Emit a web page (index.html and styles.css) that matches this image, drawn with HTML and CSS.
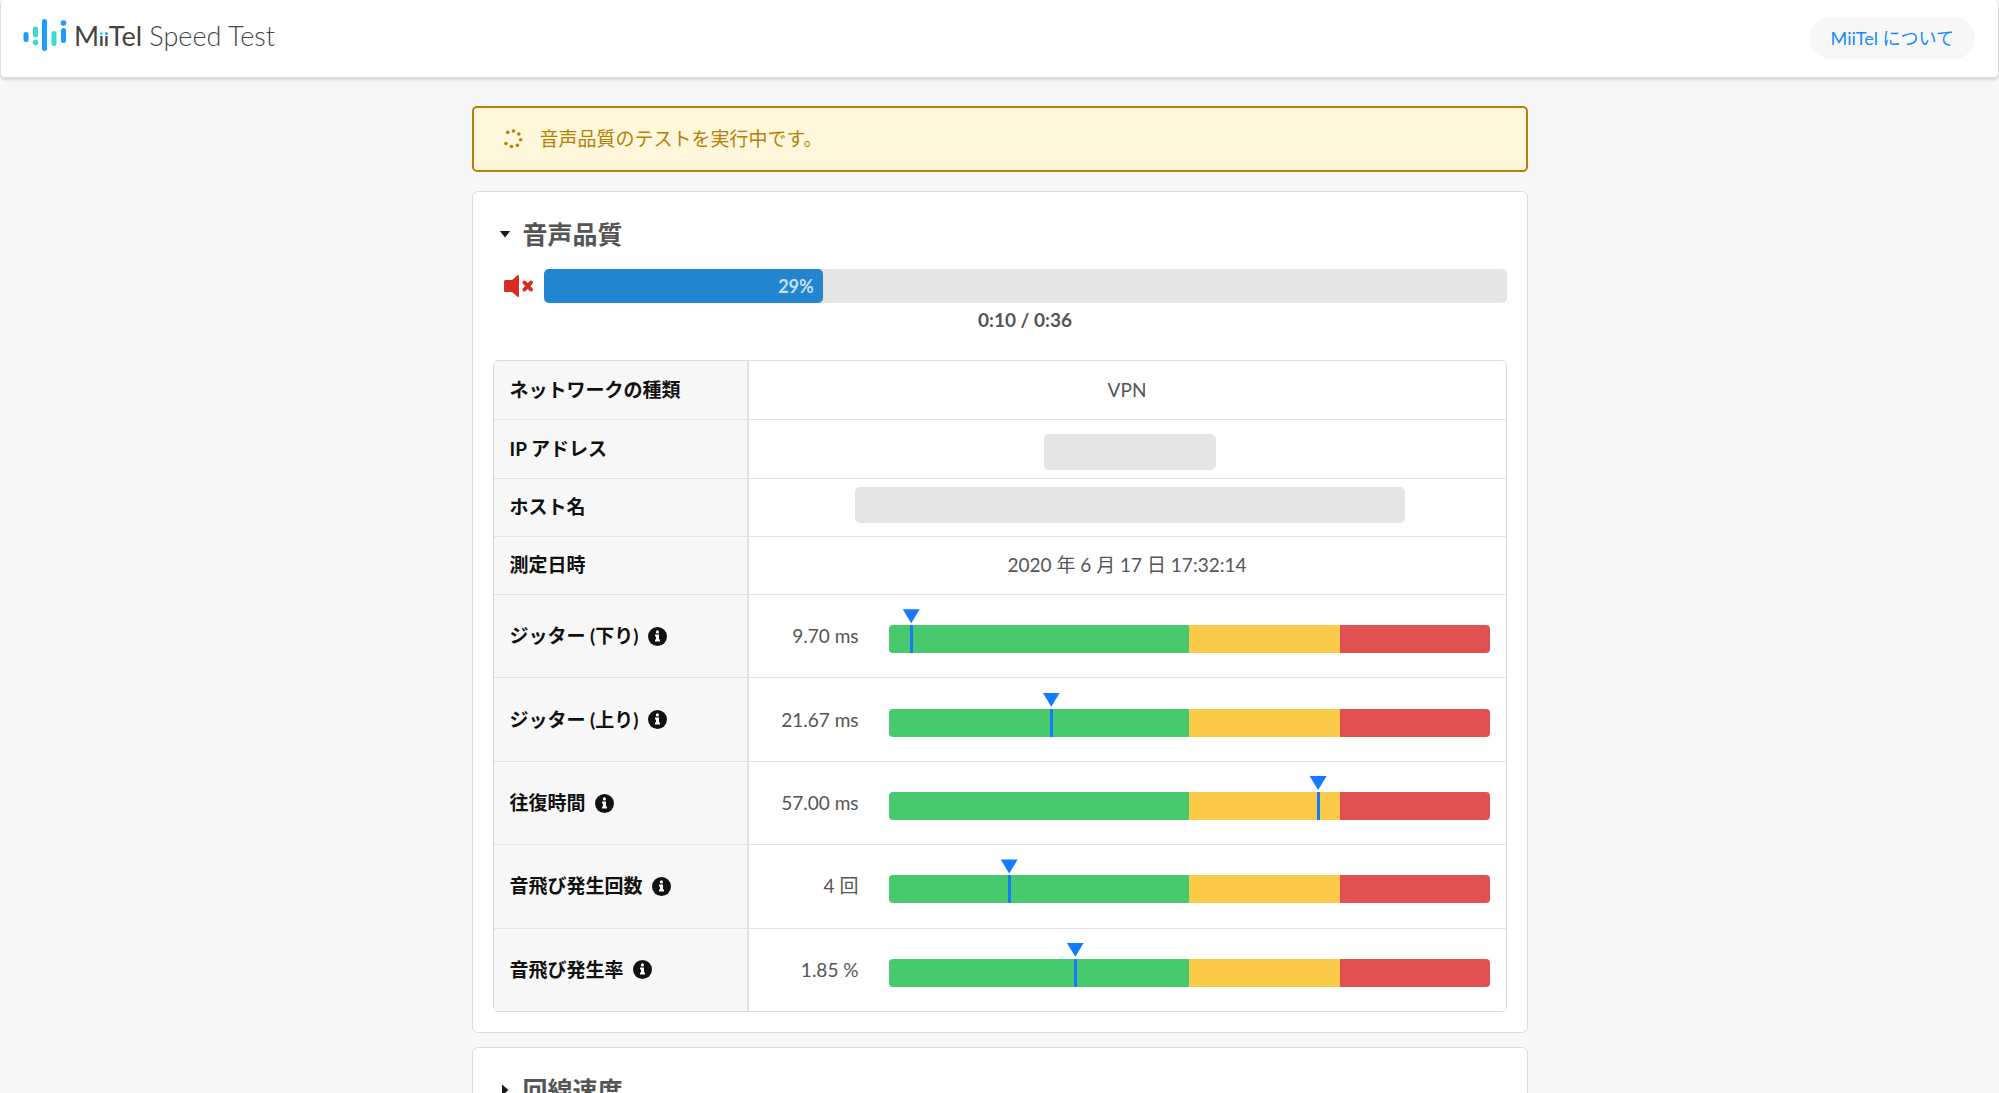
FILE: index.html
```html
<!DOCTYPE html>
<html lang="ja">
<head>
<meta charset="utf-8">
<meta name="viewport" content="width=device-width, initial-scale=1">
<title>MiiTel Speed Test</title>
<link rel="stylesheet" href="styles.css">
</head>
<body>
<header class="header">
  <a class="brand" href="#">
    <svg class="brand-mark" width="44" height="34" viewBox="0 0 44 34" fill="none" stroke-linecap="round" stroke-width="5" aria-hidden="true">
      <g stroke="#1e9bff"><path d="M3 16.500v5M21.500 3.500v27M40.500 12.500v10"/></g>
      <g stroke="#35dfc9"><path d="M12.500 11v6M31 15.500v10"/></g>
      <circle cx="12.500" cy="24.500" r="2.800" fill="#35dfc9"/>
      <circle cx="40.500" cy="5" r="2.800" fill="#1e9bff"/>
    </svg>
    <span class="brand-name"><span class="brand-strong">M<span class="brand-i brand-i-teal">i</span><span class="brand-i brand-i-blue">i</span>Tel</span> Speed Test</span>
  </a>
  <a class="pill" href="#">MiiTel について</a>
</header>

<main class="content">
  <div class="notice" role="status">
    <svg class="spinner" width="20" height="20" viewBox="0 0 20 20" fill="currentColor" aria-hidden="true">
      <circle cx="10.500" cy="2" r="1.800"/><circle cx="15.800" cy="5" r="1.800"/><circle cx="17.600" cy="10.800" r="1.800"/><circle cx="14.400" cy="16.300" r="1.800"/><circle cx="8.500" cy="17.500" r="1.800"/><circle cx="3" cy="14.500" r="1.800"/><circle cx="4.700" cy="3.400" r="1.800"/>
    </svg>
    <span>音声品質のテストを実行中です。</span>
  </div>

  <details class="card" open>
    <summary class="card-title"><span class="caret"></span>音声品質</summary>
    <div class="playback">
      <button class="mute" type="button" aria-label="ミュート">
        <svg width="30" height="22" viewBox="0 0 30 22" aria-hidden="true">
          <path fill="#d92c20" d="M1.500 5H8L13.500.300Q15-.400 15 1V21Q15 22.400 13.500 21.700L8 17H1.500Q0 17 0 15.500V6.500Q0 5 1.500 5Z"/>
          <path stroke="#d92c20" stroke-width="4" stroke-linecap="round" d="M20.500 7.500l6.500 7M27 7.500l-6.500 7"/>
        </svg>
      </button>
      <div class="progress" role="progressbar" aria-valuenow="29" aria-valuemin="0" aria-valuemax="100">
        <div class="progress-fill" style="width:29%">29%</div>
      </div>
      <div class="time">0:10 / 0:36</div>
    </div>

    <table class="results">
      <tbody>
        <tr><th scope="row">ネットワークの種類</th><td>VPN</td></tr>
        <tr><th scope="row">IP アドレス</th><td class="cell-mask cell-bottom"><span class="mask mask-short"></span></td></tr>
        <tr><th scope="row">ホスト名</th><td class="cell-mask cell-top"><span class="mask mask-long"></span></td></tr>
        <tr><th scope="row">測定日時</th><td>2020 年 6 月 17 日 17:32:14</td></tr>
        <tr class="metric">
          <th scope="row"><span class="label">ジッター (下り)<svg class="info" viewBox="0 0 19 19"><use href="#info"/></svg></span></th>
          <td><div class="reading"><span class="value">9.70 ms</span><div class="scale"><span class="pin" style="left:3.700%"></span></div></div></td>
        </tr>
        <tr class="metric">
          <th scope="row"><span class="label">ジッター (上り)<svg class="info" viewBox="0 0 19 19"><use href="#info"/></svg></span></th>
          <td><div class="reading"><span class="value">21.67 ms</span><div class="scale"><span class="pin" style="left:27%"></span></div></div></td>
        </tr>
        <tr class="metric">
          <th scope="row"><span class="label">往復時間<svg class="info" viewBox="0 0 19 19"><use href="#info"/></svg></span></th>
          <td><div class="reading"><span class="value">57.00 ms</span><div class="scale"><span class="pin" style="left:71.400%"></span></div></div></td>
        </tr>
        <tr class="metric">
          <th scope="row"><span class="label">音飛び発生回数<svg class="info" viewBox="0 0 19 19"><use href="#info"/></svg></span></th>
          <td><div class="reading"><span class="value">4 回</span><div class="scale"><span class="pin" style="left:20%"></span></div></div></td>
        </tr>
        <tr class="metric">
          <th scope="row"><span class="label">音飛び発生率<svg class="info" viewBox="0 0 19 19"><use href="#info"/></svg></span></th>
          <td><div class="reading"><span class="value">1.85 %</span><div class="scale"><span class="pin" style="left:31%"></span></div></div></td>
        </tr>
      </tbody>
    </table>
  </details>

  <details class="card">
    <summary class="card-title"><span class="caret"></span>回線速度</summary>
  </details>
</main>

<svg class="symbols" width="0" height="0" aria-hidden="true">
  <symbol id="info" viewBox="0 0 19 19">
    <circle cx="9.500" cy="9.500" r="9.500" fill="#111"/>
    <path fill="#f7f7f7" d="M7 7.500h4v5h1v2H7v-2h1v-3H7z"/>
    <circle cx="9.400" cy="4.900" r="1.600" fill="#f7f7f7"/>
  </symbol>
</svg>
</body>
</html>
```
FILE: styles.css
```css
* { box-sizing: border-box; }

body {
  margin: 0;
  height: 100vh;
  overflow: hidden;
  background: #f7f7f7;
  color: #555;
  font: 19px/28px Lato, "Noto Sans CJK JP", sans-serif;
}

a { text-decoration: none; }

.header {
  display: flex;
  align-items: flex-start;
  justify-content: space-between;
  height: 78px;
  padding: 16px 23px 0 22px;
  background: #fff;
  border: 1px solid #dedede;
  border-top-color: #fff;
  border-radius: 5px;
  box-shadow: 0 2px 3px rgba(0, 0, 0, .14);
}

.brand { display: flex; gap: 7px; color: #444; }
.brand-mark { margin-top: 1px; }
.brand-name { font-size: 27px; line-height: 37px; font-weight: 300; white-space: pre; }
.brand-strong { font-weight: 400; }
.brand-i {
  font-size: 19px;
  font-weight: 700;
  color: transparent;
  -webkit-background-clip: text;
  background-clip: text;
}
.brand-i-teal { background-image: linear-gradient(#35dfc9 40%, #444 40%); }
.brand-i-blue { background-image: linear-gradient(#1e9bff 40%, #444 40%); }

.pill {
  padding: 7px 21px;
  border-radius: 21px;
  background: #f7f7f7;
  color: #148aff;
  font-size: 18px;
}

.content {
  max-width: 1056px;
  margin: 28px auto 0;
}

.notice {
  display: flex;
  align-items: center;
  gap: 17px;
  height: 66px;
  padding: 0 29px;
  border: 2px solid #b58105;
  border-radius: 5px;
  background: #fff7db;
  color: #b58105;
}

.card {
  margin-top: 19px;
  padding: 20px;
  border: 1px solid #dcdcdc;
  border-radius: 6px;
  background: #fff;
}
.card + .card { margin-top: 14px; }

.card-title {
  display: flex;
  align-items: center;
  gap: 12px;
  padding-left: 7px;
  font-size: 25px;
  line-height: 44px;
  font-weight: 700;
  list-style: none;
}

.caret {
  width: 11px;
  height: 7px;
  background: #1b1b1b;
  clip-path: polygon(0 0, 100% 0, 50% 100%);
}
.card:not([open]) .caret {
  width: 7px;
  height: 12px;
  margin: 0 2px;
  clip-path: polygon(0 0, 100% 50%, 0 100%);
}

.playback {
  display: grid;
  grid-template-columns: 30px 1fr;
  column-gap: 10px;
  align-items: center;
  margin: 13px 0 26px 11px;
}
.mute { display: flex; padding: 0; border: 0; background: none; }
.progress {
  height: 34px;
  border-radius: 5px;
  background: #e5e5e5;
}
.progress-fill {
  height: 34px;
  padding-right: 9px;
  border-radius: 5px;
  background: #2185d0;
  color: rgba(255, 255, 255, .75);
  font-weight: 700;
  font-size: 18px;
  line-height: 34px;
  text-align: right;
}
.time {
  grid-column: 2;
  padding-top: 3px;
  font-weight: 700;
  text-align: center;
}

.results {
  width: 100%;
  height: 652px;
  table-layout: fixed;
  border: 1px solid #dcdcdc;
  border-radius: 5px;
  border-spacing: 0;
  overflow: hidden;
}
.results th,
.results td {
  height: 58px;
  padding: 0 16px;
  border-top: 1px solid #e2e2e2;
}
.results tr:first-child > * { border-top: 0; }
.results th {
  width: 255px;
  border-right: 2px solid #e2e2e2;
  background: #f7f7f7;
  color: #111;
  text-align: left;
}
.results td { text-align: center; }
.results .metric > * { height: 83px; }
.results .cell-mask { padding-left: 22px; }
.results .cell-bottom { padding-bottom: 8px; vertical-align: bottom; }
.results .cell-top { padding-top: 8px; vertical-align: top; }

.mask {
  display: block;
  max-width: 100%;
  height: 36px;
  margin: 0 auto;
  border-radius: 5px;
  background: #e5e5e5;
}
.mask-short { width: 172px; }
.mask-long { width: 550px; }

.label { display: flex; align-items: center; gap: 9px; }
.info { width: 19px; height: 19px; }

.reading {
  display: grid;
  grid-template-columns: 94px 1fr;
  align-items: center;
  column-gap: 30px;
}
.value { text-align: right; }
.scale {
  position: relative;
  height: 28px;
  margin-top: 6px;
  border-radius: 4px;
  background: linear-gradient(90deg, #48c96d 50%, #fbca49 50% 75%, #e25151 75%);
}
.pin {
  position: absolute;
  top: 0;
  width: 3px;
  height: 28px;
  margin-left: -1px;
  background: #147bff;
}
.pin::before {
  content: "";
  position: absolute;
  left: -7px;
  top: -16px;
  width: 17px;
  height: 14px;
  background: #147bff;
  clip-path: polygon(0 0, 100% 0, 50% 100%);
}

.symbols { position: absolute; }
```
